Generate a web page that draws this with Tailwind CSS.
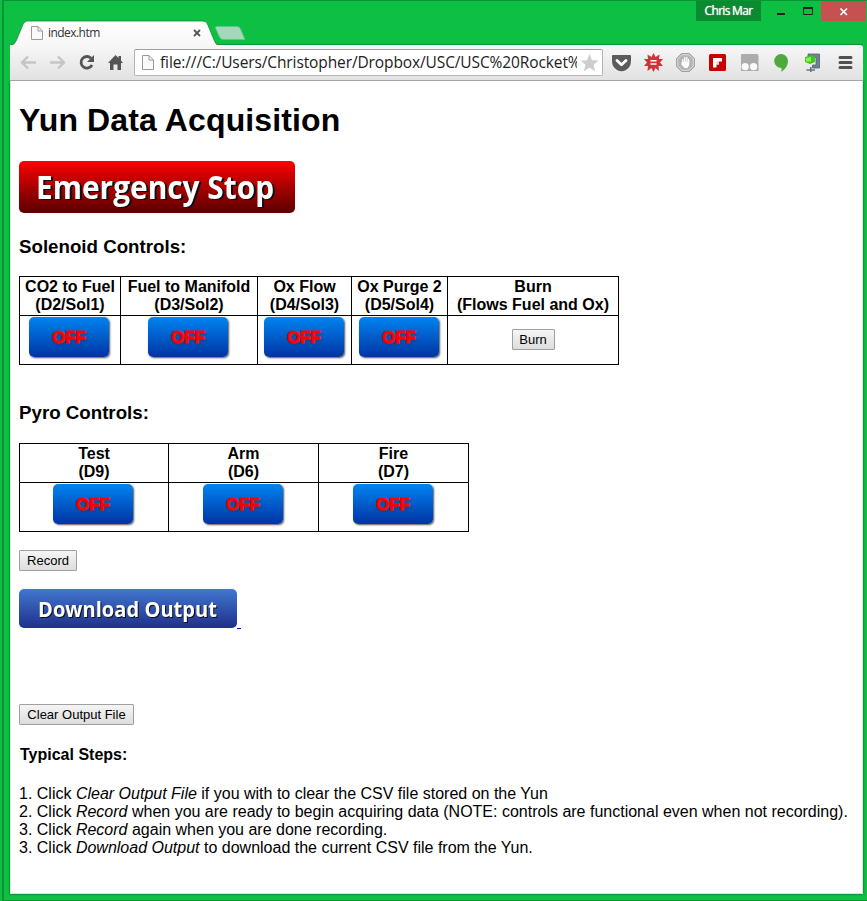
<!DOCTYPE html>
<html lang="en">
<head>
<meta charset="utf-8">
<title>index.htm</title>
<script src="https://cdn.jsdelivr.net/npm/@tailwindcss/browser@4"></script>
</head>
<body class="bg-[#0dbf42]">
<div class="relative w-[867px] h-[901px] overflow-hidden bg-[#0dbf42] flex flex-col pl-[10px] pr-[4px] font-['Liberation_Sans',Arial,sans-serif] text-black">
  <!-- window frame lines -->
  <div class="absolute left-[2px] top-0 w-[865px] h-[901px] border-t border-l-2 border-b border-[#0b9434] pointer-events-none"></div>

  <header class="h-[45px] shrink-0 flex items-start relative">
    <svg class="absolute left-0 top-0" width="853" height="46" viewBox="10 0 853 46">
      <defs><linearGradient id="tab" x1="0" y1="0" x2="0" y2="1"><stop offset="0" stop-color="#fff"/><stop offset="1" stop-color="#f7f7f8"/></linearGradient></defs>
      <path d="M217 44.5H863" stroke="#0b9434"/>
      <path d="M10 46V45.500Q14.500 45 16 41L23 24.500Q24.500 21 27 21H203Q206 21 207.500 24L214.500 41Q216 45 219 45.500V46Z" fill="url(#tab)" stroke="#0b8f33" stroke-width=".8"/>
      <path d="M10.500 46H219" stroke="#f7f7f8" stroke-width="2"/>
      <path d="M217 26.500H237Q239.500 26.500 240.500 29L245 39.500H224Q221 40 219.500 37L215.500 28Q215 26.500 217 26.500Z" fill="#a5d8bb" stroke="#60c587" stroke-width=".8"/>
      <path d="M31.500 26.500H38L42.500 31V39.500H31.500ZM38 26.500V31H42.500" fill="#fafafa" stroke="#9c9c9c"/>
      <path d="M194 30L200 36M200 30L194 36" stroke="#555" stroke-width="1.800"/>
    </svg>
    <span class="relative ml-[38px] mt-[25px] leading-[16px] text-[12px] text-[#333] font-['Open_Sans',sans-serif] tracking-[-0.55px]">index.htm</span>
    <div class="relative ml-auto mr-[-4px] mt-px flex h-[20px] text-white">
      <div class="w-[65px] bg-[#0a8a31] text-center text-[12px] leading-[20px] font-['Open_Sans',sans-serif] tracking-[-0.7px] [text-shadow:0_0_1px_#fff]">Chris Mar</div>
      <svg width="60" height="20" viewBox="761 1 60 20"><path d="M777 14H785" stroke="#222" stroke-width="2"/><path d="M803.500 8V14.500H812.500V8" fill="none" stroke="#222"/><path d="M803 8H813" stroke="#222" stroke-width="2"/></svg>
      <div class="w-[45px] mr-px bg-[#c75050] flex"><svg width="45" height="20" viewBox="821 1 45 20"><path d="M840.500 8.500L847 15M847 8.500L840.500 15" stroke="#fff" stroke-width="1.700"/></svg></div>
    </div>
  </header>

  <nav class="relative h-[36px] shrink-0 bg-linear-to-b from-[#f7f7f8] to-[#e2e2e3] border-b border-[#a5a5a6] flex rounded-tr-[3px]">
    <svg class="w-[124px] h-[35px] shrink-0" viewBox="10 45 124 35">
      <g fill="none" stroke="#c5c5c5" stroke-width="2.400"><path d="M36 62.500H22M28 56.500L22 62.500L28 68.500"/><path d="M50 62.500H64M58 56.500L64 62.500L58 68.500"/></g>
      <path d="M91 58.200A5.800 5.800 0 1 0 92 65" fill="none" stroke="#555" stroke-width="2.800"/><path d="M94 55V62H87Z" fill="#555"/>
      <path d="M108 63L115.500 55L118.500 58V56H121V60.500L123 63H121V70H117.500V64.500H113.500V70H110V63Z" fill="#555"/>
    </svg>
    <div class="h-[27px] w-[469px] mt-[4px] bg-white border border-[#b4b4b5] border-t-[#9e9e9f] rounded-[2px] flex items-center">
      <svg class="w-[25px] h-[25px] shrink-0" viewBox="135 50 25 25"><path d="M142.500 55.500H149L153.500 60V69.500H142.500ZM149 55.500V60H153.500" fill="#fafafa" stroke="#999"/></svg>
      <span class="w-[417px] h-[25px] leading-[24px] overflow-hidden whitespace-nowrap text-[15.5px] text-[#222] font-['Open_Sans',sans-serif] tracking-[-0.11px]">file:///C:/Users/Christopher/Dropbox/USC/USC%20Rocket%</span>
      <svg class="w-[25px] h-[25px] shrink-0" viewBox="577 50 25 25"><path d="M589.500 54L592 60.200L598.500 60.600L593.500 64.800L595.100 71.200L589.500 67.700L583.900 71.200L585.500 64.800L580.500 60.600L587 60.200Z" fill="#cdcdce"/></svg>
    </div>
    <svg class="w-[260px] h-[35px] shrink-0" viewBox="603 45 260 35">
      <path d="M613 55H630Q631 55 631 56V61Q631 67 626 70Q621.500 72.500 617 70Q612 67 612 61V56Q612 55 613 55Z" fill="#5b5b5d"/>
      <path d="M617 60.500L621.500 64.800L626 60.500" fill="none" stroke="#fff" stroke-width="2.800" stroke-linecap="round" stroke-linejoin="round"/>
      <path d="M653.500 53L655.500 57L659.500 54.500L659 59L663 59L660 62.500L663 66L658.500 66L659 71L655.500 68L653.500 72L651.500 68L647.500 71L648 66L644 66L647 62.500L644 59L648 59L647.500 54.500L651.500 57Z" fill="#d0333a"/><path d="M650.500 60.700H656.500M650.500 64H656.500" stroke="#fff" stroke-width="1.500"/>
      <path d="M681.500 53.500H689.500L694.500 58.500V66.500L689.500 71.500H681.500L676.500 66.500V58.500Z" fill="#b4b4b4" stroke="#a0a0a0"/><path d="M682 54.700H689L693.300 59V66L689 70.300H682L677.700 66V59Z" fill="none" stroke="#dcdcdc"/>
      <path d="M682.800 63V59.500M684.800 62V57.500M686.800 62V57.500M688.600 63V59.500" fill="none" stroke="#fff" stroke-width="1.300" stroke-linecap="round"/><path d="M682.200 61.800H689.200V65L687.500 68H684.500L681 64Z" fill="#fff"/>
      <rect x="709" y="54" width="17" height="17" rx="1.500" fill="#c80000"/><path d="M713 58H722V61.500H719V64.500H716.500V67.500H713Z" fill="#fff"/><path d="M716.500 61.500H719V64.500H716.500Z" fill="#f3cccc"/>
      <path d="M742 54H757Q758.500 54 758.500 56V71H741V55Q741 54 742 54Z" fill="#acacad"/><circle cx="745.200" cy="66.700" r="3.600" fill="#fafafa"/><circle cx="753.600" cy="66.700" r="3.600" fill="#fafafa"/>
      <path d="M781 54A7 7 0 0 1 788 61Q788 67 781.500 72V68A7 7 0 0 1 781 54Z" fill="#50a93f"/>
      <path d="M808 54H819.500V68H812.500V65H816V57.500H808Z" fill="#6e8290" stroke="#4f6472" stroke-width=".8"/><path d="M805 57L811 55.500L815 56.500V62L810 64L805 62Z" fill="#43c51d"/><path d="M806 58L811 57V61.500L806 61.500Z" fill="#8bef55"/><path d="M806.500 70H815M810.800 67V72" fill="none" stroke="#607687" stroke-width="1.600"/>
      <path d="M840 57.500H851M840 62.500H851M840 67.500H851" stroke="#505052" stroke-width="3" stroke-linecap="round"/>
    </svg>
  </nav>

  <main class="relative h-[813px] shrink-0 bg-white border-l border-r border-b border-[#d9e3dc] shadow-[0_0_2px_#07531f] pl-[8px] flex flex-col items-start text-[16px] leading-[18px] [clip-path:inset(0_-4px_-4px_-4px)]">
    <h1 class="mt-[21px] text-[32px] leading-[37px] font-bold tracking-[0.13px]">Yun Data Acquisition</h1>
    <button class="mt-[22px] w-[276px] h-[52px] rounded-[5px] bg-linear-to-b from-[#ff0000] to-[#5c0000]"><svg class="block drop-shadow-[2px_1.5px_0.5px_#111]" width="276" height="52"><text x="17" y="38" fill="#fff" font-family="Open Sans" font-size="32" font-weight="700" textLength="238" lengthAdjust="spacingAndGlyphs">Emergency Stop</text></svg></button>
    <h3 class="mt-[23px] text-[18.72px] leading-[22px] font-bold">Solenoid Controls:</h3>
    <table class="mt-[18px] w-[600px] h-[89px] table-fixed border-separate border-spacing-0 border-t border-l border-black text-center">
      <colgroup><col class="w-[101px]"><col class="w-[137px]"><col class="w-[94px]"><col class="w-[96px]"><col class="w-[171px]"></colgroup>
      <tr class="h-[39px]">
        <th class="p-0 border-r border-b border-black whitespace-nowrap">CO2 to Fuel<br>(D2/Sol1)</th>
        <th class="p-0 border-r border-b border-black whitespace-nowrap">Fuel to Manifold<br>(D3/Sol2)</th>
        <th class="p-0 border-r border-b border-black whitespace-nowrap">Ox Flow<br>(D4/Sol3)</th>
        <th class="p-0 border-r border-b border-black whitespace-nowrap">Ox Purge 2<br>(D5/Sol4)</th>
        <th class="p-0 border-r border-b border-black whitespace-nowrap">Burn<br>(Flows Fuel and Ox)</th>
      </tr>
      <tr class="h-[49px]">
        <td class="p-0 pt-px pr-[2px] border-r border-b border-black align-top"><button class="block mx-auto w-[80px] h-[40px] rounded-[5px] bg-linear-to-b from-[#0084f0] to-[#0033a4] shadow-[1px_1px_2px_#555] text-[17px] leading-[42px] font-bold text-[#f00] [-webkit-text-stroke:1px_#f00] [text-shadow:2px_2px_2px_#3338]">OFF</button></td>
        <td class="p-0 pt-px pr-[2px] border-r border-b border-black align-top"><button class="block mx-auto w-[80px] h-[40px] rounded-[5px] bg-linear-to-b from-[#0084f0] to-[#0033a4] shadow-[1px_1px_2px_#555] text-[17px] leading-[42px] font-bold text-[#f00] [-webkit-text-stroke:1px_#f00] [text-shadow:2px_2px_2px_#3338]">OFF</button></td>
        <td class="p-0 pt-px pr-px border-r border-b border-black align-top"><button class="block mx-auto w-[80px] h-[40px] rounded-[5px] bg-linear-to-b from-[#0084f0] to-[#0033a4] shadow-[1px_1px_2px_#555] text-[17px] leading-[42px] font-bold text-[#f00] [-webkit-text-stroke:1px_#f00] [text-shadow:2px_2px_2px_#3338]">OFF</button></td>
        <td class="p-0 pt-px pr-px border-r border-b border-black align-top"><button class="block mx-auto w-[80px] h-[40px] rounded-[5px] bg-linear-to-b from-[#0084f0] to-[#0033a4] shadow-[1px_1px_2px_#555] text-[17px] leading-[42px] font-bold text-[#f00] [-webkit-text-stroke:1px_#f00] [text-shadow:2px_2px_2px_#3338]">OFF</button></td>
        <td class="p-0 pt-[13px] border-r border-b border-black align-top"><button class="block mx-auto w-[43px] h-[21px] border border-[#a0a0a0] rounded-[1px] bg-linear-to-b from-[#f5f5f5] to-[#dddddd] text-[13px] leading-[19px]">Burn</button></td>
      </tr>
    </table>
    <h3 class="mt-[37px] text-[18.72px] leading-[22px] font-bold">Pyro Controls:</h3>
    <table class="mt-[19px] w-[450px] h-[89px] table-fixed border-separate border-spacing-0 border-t border-l border-black text-center">
      <colgroup><col class="w-[149px]"><col class="w-[150px]"><col class="w-[150px]"></colgroup>
      <tr class="h-[39px]">
        <th class="p-0 border-r border-b border-black">Test<br>(D9)</th>
        <th class="p-0 border-r border-b border-black">Arm<br>(D6)</th>
        <th class="p-0 border-r border-b border-black">Fire<br>(D7)</th>
      </tr>
      <tr class="h-[49px]">
        <td class="p-0 pt-px pr-[2px] border-r border-b border-black align-top"><button class="block mx-auto w-[80px] h-[40px] rounded-[5px] bg-linear-to-b from-[#0084f0] to-[#0033a4] shadow-[1px_1px_2px_#555] text-[17px] leading-[42px] font-bold text-[#f00] [-webkit-text-stroke:1px_#f00] [text-shadow:2px_2px_2px_#3338]">OFF</button></td>
        <td class="p-0 pt-px pr-px border-r border-b border-black align-top"><button class="block mx-auto w-[80px] h-[40px] rounded-[5px] bg-linear-to-b from-[#0084f0] to-[#0033a4] shadow-[1px_1px_2px_#555] text-[17px] leading-[42px] font-bold text-[#f00] [-webkit-text-stroke:1px_#f00] [text-shadow:2px_2px_2px_#3338]">OFF</button></td>
        <td class="p-0 pt-px pr-px border-r border-b border-black align-top"><button class="block mx-auto w-[80px] h-[40px] rounded-[5px] bg-linear-to-b from-[#0084f0] to-[#0033a4] shadow-[1px_1px_2px_#555] text-[17px] leading-[42px] font-bold text-[#f00] [-webkit-text-stroke:1px_#f00] [text-shadow:2px_2px_2px_#3338]">OFF</button></td>
      </tr>
    </table>
    <button class="mt-[18px] w-[58px] h-[21px] border border-[#a0a0a0] rounded-[1px] bg-linear-to-b from-[#f5f5f5] to-[#dddddd] text-[13px] leading-[19px]">Record</button>
    <a class="mt-[18px] h-[40px] flex items-start">
      <span class="w-[218px] h-[39px] rounded-[5px] bg-linear-to-b from-[#4377cf] to-[#20308a]"><svg class="block drop-shadow-[1px_1px_0.5px_#111]" width="218" height="39"><text x="19" y="28" fill="#fff" font-family="Open Sans" font-size="21" font-weight="700" textLength="179" lengthAdjust="spacingAndGlyphs">Download Output</text></svg></span>
      <span class="w-[4px] h-[40px] border-b border-[#0000cc]"></span>
    </a>
    <button class="mt-[75px] w-[115px] h-[21px] border border-[#a0a0a0] rounded-[1px] bg-linear-to-b from-[#f5f5f5] to-[#dddddd] text-[13px] leading-[19px] whitespace-nowrap">Clear Output File</button>
    <h4 class="mt-[21px] ml-px font-bold">Typical Steps:</h4>
    <p class="mt-[21px] whitespace-nowrap">1. Click <i>Clear Output File</i> if you with to clear the CSV file stored on the Yun<br>2. Click <i>Record</i> when you are ready to begin acquiring data (NOTE: controls are functional even when not recording).<br>3. Click <i>Record</i> again when you are done recording.<br>3. Click <i>Download Output</i> to download the current CSV file from the Yun.</p>
  </main>
</div>
</body>
</html>
